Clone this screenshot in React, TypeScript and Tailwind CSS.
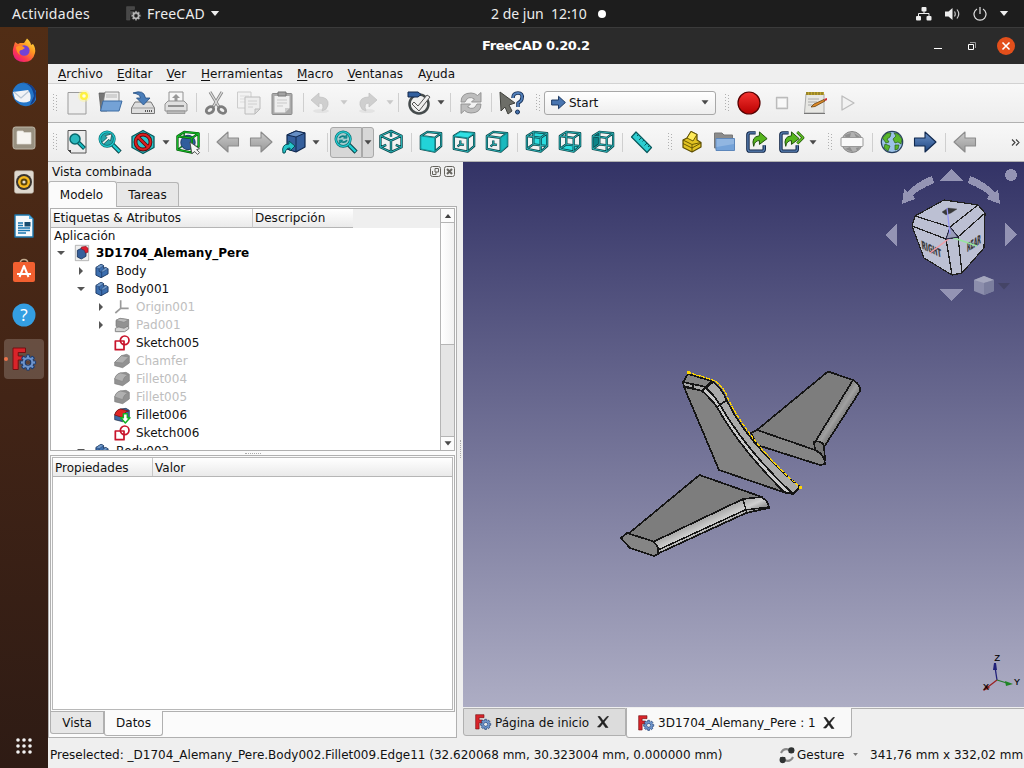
import React from "react";

type P = { children?: React.ReactNode };

const Ico = ({ children, className = "h-6 w-6", box = "0 0 24 24" }: P & { className?: string; box?: string }) => (
  <svg viewBox={box} className={className + " shrink-0 overflow-visible"} strokeLinejoin="round">
    {children}
  </svg>
);
const Slot = ({ children }: P) => <div className="flex w-[33px] shrink-0 justify-center">{children}</div>;
const Caret = ({ dim }: { dim?: boolean }) => (
  <svg viewBox="0 0 8 5" className="h-[5px] w-2 shrink-0">
    <path d="M.5 .3H7.5L4 4.6Z" fill={dim ? "#c9c9c9" : "#4a4a4a"} />
  </svg>
);
const Line = () => <div className="h-[19px] w-px bg-[#cfcfcf]" />;
const Handle = () => (
  <svg viewBox="0 0 5 18" className="h-[18px] w-[5px] shrink-0">
    {[0, 3, 6, 9, 12, 15].map((y) => (
      <g key={y} fill="#b0b0b0">
        <rect x="0" y={y} width="1" height="1" />
        <rect x="3" y={y + 1} width="1" height="1" />
      </g>
    ))}
  </svg>
);

const faces = {
  front: "1,6 16,8 16,23 1,20",
  top: "1,6 8,1.5 23,3 16,8",
  right: "16,8 23,3 23,17 16,23",
  rear: "8,1.5 23,3 23,17 8,15",
  bottom: "1,20 16,23 23,17 8,15",
  left: "1,6 8,1.5 8,15 1,20",
};
const cubeEdges = "M8 11V15L12 15.6M8 15L5 17.2M1 6L8 1.5L23 3V17L16 23L1 20ZM1 6L16 8V23M16 8L23 3";
const cubeOpen = "M8 1.5V15L23 17M8 15L1 20M1 6L8 1.5L23 3V17L16 23L1 20ZM1 6L16 8V23M16 8L23 3";
const ViewCube = ({ face }: { face: keyof typeof faces }) => {
  const outer = face === "front" ? "M1 6L8 1.5L23 3V17L16 23L1 20ZM1 6L16 8V23M16 8L23 3" : face === "top" || face === "right" ? cubeEdges : cubeOpen;
  return (
    <Ico box="-1 -0.500 26 26">
      <polygon points={faces[face]} fill={face === "left" ? "#0d8488" : face === "right" ? "#13a9ad" : "#2bdde0"} />
      <path d={outer} fill="none" stroke="#0b4347" strokeWidth="2.500" />
      <path d={outer} fill="none" stroke="#2bb9bc" strokeWidth="1" />
      {face === "front" && <polygon points={faces.front} fill="#22d3d8" stroke="#12888c" strokeWidth=".9" />}
      {face === "top" && <polygon points={faces.top} fill="#2fe0e4" stroke="#12888c" strokeWidth=".9" />}
      {face === "right" && <polygon points={faces.right} fill="#18b9be" stroke="#12888c" strokeWidth=".9" />}
    </Ico>
  );
};
const Lens = ({ kind }: { kind: "arrow" | "sync" }) => (
  <Ico box="-0.500 -0.500 25 25">
    <path d="M14 14L22.500 22.500" stroke="#073f43" strokeWidth="4.600" />
    <path d="M14 14L22 22" stroke="#20cdd2" strokeWidth="2.600" />
    <circle cx="9" cy="9" r="7.600" fill={kind === "arrow" ? "#25a5aa" : "#a5cdcf"} stroke="#0a6a6e" strokeWidth="2.700" />
    <circle cx="9" cy="9" r="7.600" fill="none" stroke="#20cdd2" strokeWidth="1.400" />
    {kind === "arrow" ? (
      <path d="M3.500 12.500L9 7.500L7 5.500L14 3.500L12.500 11L10.700 9.200L5.500 14Z" fill="#f4f4f4" stroke="#174a4e" strokeWidth=".8" />
    ) : (
      <g fill="none" stroke="#0f7e83" strokeWidth="1.800">
        <path d="M5 8Q7 4.500 11.500 6.500M13 10Q11 13.500 6.500 11.500" />
        <path d="M13 4V8H9.500ZM5 14V10H8.500Z" fill="#15989d" strokeWidth=".8" />
      </g>
    )}
  </Ico>
);
const Arrow = ({ dir, blue }: { dir: "l" | "r"; blue?: boolean }) => (
  <Ico>
    <defs>
      <linearGradient id={"ar" + dir + (blue ? "b" : "g")} x2="0" y2="1">
        <stop stopColor={blue ? "#6c93c9" : "#cacaca"} />
        <stop offset="1" stopColor={blue ? "#1d447f" : "#989898"} />
      </linearGradient>
    </defs>
    <path
      d={dir === "l" ? "M1 12L12 2V8H22.5V16H12V22Z" : "M23 12L12 2V8H1.5V16H12V22Z"}
      fill={"url(#ar" + dir + (blue ? "b" : "g") + ")"}
      stroke={blue ? "#10284e" : "#8b8b8b"}
      strokeWidth="1.1"
    />
  </Ico>
);
const Folder = () => (
  <Ico>
    <path d="M1.500 3H9L11 5H19.500V18H1.500Z" fill="#8b8b8b" stroke="#777" />
    <path d="M3 8.500H21.500V20.500H3Z" fill="#74a2d8" stroke="#5d87bb" />
    <path d="M3.500 9H21V14L3.500 17Z" fill="#91b6e1" />
  </Ico>
);
const Link = ({ multi }: { multi?: boolean }) => (
  <Ico box="0 0 25 25">
    <path d="M10 3H4Q2 3 2 5V20Q2 22 4 22H17Q19 22 19 20V16" fill="none" stroke="#0e2345" strokeWidth="3.600" />
    <path d="M10 3H4Q2 3 2 5V20Q2 22 4 22H17Q19 22 19 20V16" fill="none" stroke="#5e86ba" strokeWidth="1.300" />
    <path d="M8 17Q5 7 14 6V2L22 9L14 15V11Q9 11 8 17Z" fill="#56b51d" stroke="#1d4d08" strokeWidth="1" transform={multi ? "translate(-1 0)" : undefined} />
    {multi && <path d="M19 2L25 8L19 14" fill="none" stroke="#2a650d" strokeWidth="3" />}
    {multi && <path d="M19 2L25 8L19 14" fill="none" stroke="#66c729" strokeWidth="1.300" />}
  </Ico>
);
const Undo = ({ flip }: { flip?: boolean }) => (
  <Ico>
    <g transform={flip ? "translate(24 0) scale(-1 1)" : undefined}>
      <ellipse cx="13" cy="20" rx="8" ry="2" fill="#e3e3e3" />
      <path d="M3 9L11 2V6Q21 6 20 14Q19 19 14 20Q17 12 11 12V16Z" fill="#cfcfcf" stroke="#c3c3c3" strokeWidth=".8" />
    </g>
  </Ico>
);
const Gear = ({ fill, stroke }: { fill: string; stroke: string }) => (
  <g transform="translate(16 15.500)">
    {[0, 45, 90, 135].map((a) => (
      <rect key={a} x="-1.600" y="-7.600" width="3.200" height="15.200" rx=".5" fill={fill} stroke={stroke} strokeWidth="1" transform={"rotate(" + a + ")"} />
    ))}
    <circle r="5.400" fill={fill} />
    <circle r="2.600" fill="#e2e2e2" stroke={stroke} strokeWidth="1.400" />
  </g>
);
const FreeCad = ({ className, grey, hole = "#e8e8e8" }: { className: string; grey?: boolean; hole?: string }) => (
  <Ico className={className}>
    <path d="M1 1H13.500V5.500H6.200V9H11V13H6.200V22.500H1Z" fill={grey ? "#474747" : "#d9242a"} stroke={grey ? "#5a5a5a" : "#6f0b0e"} strokeWidth=".9" />
    <Gear fill={grey ? "#b8b8b8" : "#6e94cb"} stroke={grey ? "#444" : "#183a70"} />
    <circle cx="16" cy="15.500" r="2.300" fill={hole} />
  </Ico>
);

const Sync = ({ dark }: { dark?: boolean }) => (
  <Ico className={dark ? "h-4 w-4" : "h-6 w-6"}>
    {dark ? (
      <g>
        <path d="M3 9Q7 1 15 4M21 15Q17 23 9 20" fill="none" stroke="#8a8a8a" strokeWidth="3.200" />
        <circle cx="18.500" cy="5" r="4.700" fill="#303434" />
        <circle cx="5.500" cy="19.500" r="4.700" fill="#303434" />
        <path d="M14 9H22V1M2 23V15H10" fill="#303434" />
      </g>
    ) : (
      <g fill="#bdbdbd" stroke="#8f8f8f" strokeWidth=".9">
        <path d="M2 11Q2 2 12 2Q16 2 18.500 4.500L22 1.500V11H12.500L15.500 8Q9 4 6 11Z" />
        <path d="M22 13Q22 22 12 22Q8 22 5.500 19.500L2 22.500V13H11.500L8.500 16Q15 20 18 13Z" />
      </g>
    )}
  </Ico>
);

const TopBar = () => (
  <header className="flex h-[27px] shrink-0 items-center bg-[#1d1d1d] font-['Noto_Sans','DejaVu_Sans',sans-serif] text-[14px] leading-none text-[#ececec]">
    <span className="ml-3 w-[112px] tracking-[.3px]">Actividades</span>
    <FreeCad className="ml-[2px] h-[15px] w-[15px]" grey hole="#1d1d1d" />
    <span className="ml-[6px] w-[60px] tracking-[.2px]">FreeCAD</span>
    <svg viewBox="0 0 10 6" className="ml-[3px] h-[5px] w-[10px]"><path d="M0 0H10L5 6Z" fill="#eee" /></svg>
    <span className="ml-[271px] w-[98px] whitespace-pre">2 de jun  12:10</span>
    <span className="ml-[9px] h-2 w-2 rounded-full bg-white" />
    <div className="ml-auto flex items-center pr-[15px]">
      <svg viewBox="0 0 16 14" className="h-[14px] w-4" fill="#eee"><rect x="5.500" width="5" height="4.500" rx="1" /><rect x="0" y="9" width="5" height="4.500" rx="1" /><rect x="10.500" y="9" width="5" height="4.500" rx="1" /><path d="M2.500 9V6.500H13V9M8 4V7" fill="none" stroke="#eee" /></svg>
      <svg viewBox="0 0 16 14" className="ml-[13px] h-[14px] w-4"><path d="M0 4.500H3.500L7.500 1V13L3.500 9.500H0Z" fill="#eee" /><path d="M9.500 4.500Q11 7 9.500 9.500M12 2.500Q15.500 7 12 11.500" fill="none" stroke="#ccc" strokeWidth="1.200" /></svg>
      <svg viewBox="0 0 14 14" className="ml-[12px] h-[14px] w-[14px]"><path d="M4 2A6 6 0 1 0 10 2M7 0V7" fill="none" stroke="#e4e4e4" strokeWidth="1.200" /></svg>
      <svg viewBox="0 0 10 6" className="ml-[12px] h-[5px] w-[10px]"><path d="M0 0H10L5 6Z" fill="#eee" /></svg>
    </div>
  </header>
);

const DockSlot = ({ children, active }: P & { active?: boolean }) => (
  <div className="flex h-[44.1px] w-full shrink-0 items-center">
    <span className={active ? "ml-1 h-1 w-1 rounded-full bg-[#e95420]" : "ml-1 h-1 w-1"} />
    <div className={active ? "-ml-1 flex h-10 w-10 items-center justify-center rounded bg-[#ffffff30]" : "-ml-1 flex h-10 w-10 items-center justify-center"}>{children}</div>
  </div>
);
const Dock = () => (
  <aside className="flex w-12 shrink-0 flex-col bg-gradient-to-b from-[#512d15] via-[#422416] to-[#2e1b14] pt-[1px]">
    <DockSlot>
      <Ico>
        <defs>
          <linearGradient id="ff" x1="1" x2=".2" y2="1"><stop stopColor="#fff44f" /><stop offset=".4" stopColor="#ff9a20" /><stop offset=".75" stopColor="#ff3b4e" /><stop offset="1" stopColor="#e31587" /></linearGradient>
        </defs>
        <path d="M1.500 9L3 4L6 6L8 5L12 5L15 .5Q19 4 19 7L21 6Q24 10 23 15Q21 24 12 24Q3 24 1 16Q.3 12 1.500 9Z" fill="url(#ff)" />
        <circle cx="12.300" cy="12.500" r="5.300" fill="#7342d6" />
        <path d="M4 9Q9 6 13 10L10 12Q6 12 8 17Q4 14 4 9Z" fill="#ff9226" />
      </Ico>
    </DockSlot>
    <DockSlot>
      <Ico>
        <path d="M6 2Q13-2 20 4L24 9V18Q20 25 12 24Q3 22 .5 13Q0 6 6 2Z" fill="#2376c9" />
        <path d="M9 1Q20 1 22 14L18 23Q24 20 24 11Q22 0 9 1Z" fill="#153f8b" />
        <path d="M1 10L16 8Q20 13 18 19Q10 23 3 17Z" fill="#f2f3f6" />
        <path d="M2 10L9 16L17 9" fill="none" stroke="#b8c5d4" strokeWidth="1.200" />
      </Ico>
    </DockSlot>
    <DockSlot>
      <Ico><rect x="1" y="1" width="22" height="22" rx="2.500" fill="#989080" stroke="#beb7a8" /><path d="M5 6Q5 5 6 5H11L12 6.500H19V18H5Z" fill="#f6f4f0" stroke="#e0dcd4" strokeWidth=".7" /></Ico>
    </DockSlot>
    <DockSlot>
      <Ico><rect x="2.500" y=".8" width="19" height="22.500" rx="2" fill="#dfd9cf" stroke="#b6afa2" strokeWidth=".6" /><circle cx="12" cy="12" r="8" fill="#393531" /><circle cx="12" cy="12" r="6" fill="#f5b81e" /><circle cx="12" cy="12" r="3.500" fill="#57430c" /><circle cx="12" cy="12" r="1.600" fill="#e7e1d3" /></Ico>
    </DockSlot>
    <DockSlot>
      <Ico><path d="M3 1H17L21 5V23H3Z" fill="#f5f9fc" stroke="#1c78af" strokeWidth="1.400" /><path d="M17 1V5H21Z" fill="#58b2e4" /><path d="M6 9H11M6 11.500H11M6 14H18M6 16.500H18M6 19H14" stroke="#1976af" strokeWidth="1.300" /><rect x="12.500" y="8" width="6" height="4.500" fill="#164c70" /></Ico>
    </DockSlot>
    <DockSlot>
      <Ico><path d="M8 5Q8 .5 12 .5T16 5" fill="none" stroke="#c1a98d" strokeWidth="1.400" /><rect x="1" y="3" width="22" height="20" rx="2" fill="#f26030" /><path d="M7.500 18L12 7L16.500 18M5 15H19" fill="none" stroke="#fff" strokeWidth="2" /></Ico>
    </DockSlot>
    <DockSlot>
      <Ico><circle cx="12" cy="12" r="11.500" fill="#349ee2" /><text x="12" y="18" fontSize="17" textAnchor="middle" fill="#fff" fontFamily="Noto Sans, sans-serif">?</text></Ico>
    </DockSlot>
    <DockSlot active><FreeCad className="h-6 w-6" hole="#5d4033" /></DockSlot>
    <svg viewBox="0 0 16 16" className="mt-auto mb-[14px] ml-4 h-4 w-4" fill="#f3f3f3">
      {[2, 8, 14].map((x) => [2, 8, 14].map((y) => <circle key={x + "-" + y} cx={x} cy={y} r="1.800" />))}
    </svg>
  </aside>
);

const Menu = () => (
  <nav className="flex h-[19px] shrink-0 items-center bg-[#efefef] pl-[10px] text-[12px] leading-none">
    {[
      ["A", "rchivo", "w-[59px]"],
      ["E", "ditar", "w-[49.500px]"],
      ["V", "er", "w-[34.500px]"],
      ["H", "erramientas", "w-[96px]"],
      ["M", "acro", "w-[50.500px]"],
      ["V", "entanas", "w-[70.500px]"],
      ["Ay", "uda", "w-[50px]"],
    ].map(([a, b, w]) => (
      <span key={a + b} className={w + " shrink-0"}>
        {a === "Ay" ? <>A<u className="underline-offset-2">y</u></> : <u className="underline-offset-2">{a}</u>}
        {b}
      </span>
    ))}
  </nav>
);

const ToolbarFile = () => (
  <div className="flex h-10 shrink-0 items-center border-t border-b border-t-[#d2d2d2] border-b-[#b1b1b1] bg-gradient-to-b from-[#f8f8f8] to-[#ededed] pb-px">
    <div className="flex w-[12.500px] shrink-0 pl-[5px]"><Handle /></div>
    <Slot><Ico><path d="M3 1.500H21V23H3Z" fill="#eee" stroke="#9b9b9b" /><circle cx="19" cy="5" r="6" fill="#fff79a" opacity=".5" /><circle cx="19" cy="5" r="4" fill="#fff23d" /><circle cx="19" cy="5" r="1.800" fill="#fffde0" /></Ico></Slot>
    <Slot><Ico><path d="M1 2H8L9 4V20H3Z" fill="#777" stroke="#555" strokeWidth=".7" /><path d="M7 1H21V13H5Z" fill="#ededed" stroke="#777" strokeWidth=".8" /><path d="M8 4H19M8 6H19" stroke="#b5b5b5" /><path d="M5 10H24L21 20H2.500Z" fill="#74a2d6" stroke="#3c6ca3" /></Ico></Slot>
    <Slot><Ico><path d="M4 11H20L23.500 17V22.500H.500V17Z" fill="#dedede" stroke="#777" /><path d="M.500 17H23.500" stroke="#9b9b9b" /><path d="M14 20H21" stroke="#555" strokeWidth="2" strokeDasharray="1 1" /><path d="M2 2Q13-2 14.500 7H19L12.500 14L5.500 7H9.500Q9 3 2 2Z" fill="#4a7db9" stroke="#254e82" strokeWidth=".8" /></Ico></Slot>
    <Slot><Ico><path d="M5 1H19V13H5Z" fill="#f7f7f7" stroke="#929292" /><path d="M12 3L16 7H13.500V11H10.500V7H8Z" fill="#989898" /><path d="M1 13L4 10H20L23 13V20H1Z" fill="#e0e0e0" stroke="#929292" /><path d="M4 15H20" stroke="#777" strokeWidth="1.500" /><path d="M3 20H21V22.500H3Z" fill="#bbb" stroke="#8d8d8d" strokeWidth=".7" /></Ico></Slot>
    <div className="flex w-[7px] justify-center"><Line /></div>
    <Slot><Ico><path d="M6 1L15 16M18 1L9 16" stroke="#888" strokeWidth="3" /><path d="M6 1L15 16M18 1L9 16" stroke="#ddd" strokeWidth="1.300" /><g fill="none" stroke="#7d7d7d" strokeWidth="2.800"><ellipse cx="6" cy="19" rx="4" ry="3" transform="rotate(-35 6 19)" /><ellipse cx="18" cy="19" rx="4" ry="3" transform="rotate(35 18 19)" /></g></Ico></Slot>
    <Slot><Ico><path d="M.500 1H14V17H.500Z" fill="#f2f2f2" stroke="#ccc" /><path d="M3 5H12M3 8H8M3 11H8" stroke="#ddd" /><path d="M8 6H23V18L18 23H8Z" fill="#ededed" stroke="#bcbcbc" /><path d="M11 10H20M11 13H20M11 16H16" stroke="#d0d0d0" /><path d="M18 23V18H23Z" fill="#ddd" stroke="#bbb" /></Ico></Slot>
    <Slot><Ico><rect x="2" y="2.500" width="20" height="21" rx="1" fill="#aaa" stroke="#8b8b8b" /><path d="M4.500 5H19.500V17L15 21.500H4.500Z" fill="#eee" /><path d="M8 1H16V5H8Z" fill="#a2a2a2" stroke="#777" /><path d="M7 9H17M7 12H17M7 15H13" stroke="#c9c9c9" /><path d="M15 21.500V17H19.500Z" fill="#ccc" /></Ico></Slot>
    <div className="flex w-[5px] justify-end"><Line /></div>
    <Slot><Undo /></Slot>
    <div className="flex w-[15px] justify-center"><Caret dim /></div>
    <Slot><Undo flip /></Slot>
    <div className="flex w-[10px] shrink-0 justify-center"><Caret dim /></div>
    <div className="flex w-2 justify-center"><Line /></div>
    <Slot><Ico><circle cx="12" cy="13" r="9.500" fill="#efefef" stroke="#454b4c" strokeWidth="2.500" /><path d="M1 1H11L14 3.500L11 6H1Z" fill="#315f9f" stroke="#14294b" /><path d="M5 13L7 11L11 15L20 4L23 6L12 20Z" fill="#eee" stroke="#555" /></Ico></Slot>
    <div className="flex w-[11px] justify-center"><Caret /></div>
    <div className="flex w-2 justify-center"><Line /></div>
    <Slot><Sync /></Slot>
    <div className="flex w-[7px] justify-center"><Line /></div>
    <Slot><Ico><path d="M1 1L16 12L10 14L13 20L9 23L6 16L2 20Z" fill="#6d6e68" stroke="#41423d" /><path d="M14 7Q14 2 19 2T23 7Q23 10 19 12V16" fill="none" stroke="#172f56" strokeWidth="3.600" /><path d="M14 7Q14 2 19 2T23 7Q23 10 19 12V16" fill="none" stroke="#5280bb" strokeWidth="1.800" /><circle cx="18.500" cy="21" r="2" fill="#4673ad" stroke="#172f56" /></Ico></Slot>
    <div className="flex w-[16.500px] shrink-0 justify-center pl-[6px]"><Handle /></div>
    <div className="flex h-6 w-[172px] shrink-0 items-center rounded-[3px] border border-[#a8a8a8] bg-gradient-to-b from-white to-[#eee] pr-[6px] pl-[6px]">
      <svg viewBox="0 0 24 24" className="h-[15px] w-[15px]"><path d="M1 8H12V2L23 12L12 22V16H1Z" fill="#4975b0" stroke="#15335f" strokeWidth="1.500" /></svg>
      <span className="ml-[3px] flex-1 text-[12px] leading-none">Start</span>
      <Caret />
    </div>
    <div className="flex w-[16.500px] shrink-0 justify-center pl-[6px]"><Handle /></div>
    <Slot><Ico><defs><linearGradient id="rec" x2="0" y2="1"><stop stopColor="#f53431" /><stop offset="1" stopColor="#b80000" /></linearGradient></defs><circle cx="12" cy="12" r="11" fill="url(#rec)" stroke="#500" strokeWidth="1.200" /></Ico></Slot>
    <Slot><Ico><rect x="6.500" y="6.500" width="11" height="11" fill="#e8e8e8" stroke="#bbb" strokeWidth="1.300" /><rect x="8" y="8" width="8" height="8" fill="#f8f8f8" /></Ico></Slot>
    <Slot><Ico><path d="M3 3H21V22H1.500Z" fill="#e7e7e3" stroke="#aaa" /><path d="M3 1H21V4H3Z" fill="#bea42f" /><path d="M4 1V4M7 1V4M10 1V4M13 1V4M16 1V4M19 1V4" stroke="#675a22" strokeWidth=".8" /><path d="M5 8H16M5 11H14M5 14H10" stroke="#aaa" /><path d="M8 16L11 13L21 8.500L22 10L12 15.500Z" fill="#e08b28" stroke="#6a410f" strokeWidth=".8" /><path d="M21 8L24 7V9L22.500 10Z" fill="#d02a36" /><path d="M1 22.500H22" stroke="#777" /></Ico></Slot>
    <Slot><Ico><path d="M6 5L18 12L6 19Z" fill="#f2f2f2" stroke="#bdbdbd" strokeWidth="1.300" /></Ico></Slot>
  </div>
);

const isoEdges = "M12 1L23 6V18L12 23L1 18V6ZM1 6L12 11L23 6M12 11V23M12 1V7M1 18L7 15.500M23 18L17 15.500";
const ToolbarView = () => (
  <div className="flex h-[39px] shrink-0 items-center border-b border-[#b1b1b1] bg-gradient-to-b from-[#f8f8f8] to-[#ededed]">
    <div className="flex w-[12.500px] shrink-0 pl-[5px]"><Handle /></div>
    <Slot><Ico><path d="M3 .5H21V23H6L3 20Z" fill="#ececec" stroke="#555" /><path d="M3 20H6V23Z" fill="#444" /><path d="M13 12L19.500 18.500" stroke="#075054" strokeWidth="4" /><path d="M13 12L19 18" stroke="#18bcc2" strokeWidth="2" /><circle cx="10" cy="9" r="5" fill="#2bb9bd" stroke="#07666a" strokeWidth="1.500" /></Ico></Slot>
    <Slot><Lens kind="arrow" /></Slot>
    <Slot><Ico><path d="M12 .5L23 6.500V17.500L12 23.500L1 17.500V6.500Z" fill="#29c6cb" stroke="#08575b" strokeWidth="1.300" /><circle cx="12" cy="12" r="7.500" fill="none" stroke="#5b0a0d" strokeWidth="3.800" /><path d="M6.500 6.500L17.500 17.500" stroke="#5b0a0d" strokeWidth="3.800" /><circle cx="12" cy="12" r="7.500" fill="none" stroke="#dc2020" strokeWidth="2" /><path d="M6.500 6.500L17.500 17.500" stroke="#dc2020" strokeWidth="2" /></Ico></Slot>
    <div className="flex w-3 shrink-0 justify-center"><Caret /></div>
    <Slot><Ico box="-0.500 -0.500 25 25"><path d="M8 1.500V15L23 17M8 15L1 20" fill="none" stroke="#0b7a18" strokeWidth="1.600" /><circle cx="12" cy="12.500" r="7.500" fill="#315d9c" stroke="#183766" /><path d="M1 6L8 1.500L23 3V17L16 23L1 20ZM1 6L16 8V23M16 8L23 3" fill="none" stroke="#075109" strokeWidth="2.400" /><path d="M1 6L8 1.500L23 3V17L16 23L1 20ZM1 6L16 8V23M16 8L23 3" fill="none" stroke="#12b726" strokeWidth="1.200" /><path d="M14 12L24 19L21 20L24 23L22 25L19 22L16 24Z" fill="#f5f5f5" stroke="#444" strokeWidth=".9" /></Ico></Slot>
    <div className="flex w-[7px] justify-center"><Line /></div>
    <Slot><Arrow dir="l" /></Slot>
    <Slot><Arrow dir="r" /></Slot>
    <Slot><Ico><path d="M5 5L14 1L23 3V17L14 22L5 19Z" fill="#355f9c" stroke="#10284f" strokeWidth="1.200" /><path d="M5 5L14 7L23 3L14 1Z" fill="#668fc5" stroke="#10284f" /><path d="M14 7V22" stroke="#10284f" /><path d="M1 23Q-1 14 7 14V11L13 16L8 21V18Q4 18 3 23Z" fill="#25c5ca" stroke="#075156" /></Ico></Slot>
    <div className="flex w-[11.500px] shrink-0 justify-center"><Caret /></div>
    <div className="flex w-2 shrink-0 justify-center pl-[2px]"><Line /></div>
    <div className="flex h-[31px] w-8 shrink-0 items-center justify-center rounded-l-[3px] border border-[#a9a9a9] bg-[#d7d7d7]"><Lens kind="sync" /></div>
    <div className="mr-[.5px] flex h-[31px] w-3 shrink-0 items-center justify-center rounded-r-[3px] border border-[#a9a9a9] bg-[#d7d7d7]"><Caret /></div>
    <Slot><Ico box="-0.500 0 25 25"><g fill="none"><path d={isoEdges} stroke="#0b4347" strokeWidth="2.500" /><path d={isoEdges} stroke="#2bb9bc" strokeWidth="1" /></g></Ico></Slot>
    <div className="flex w-[7px] justify-center"><Line /></div>
    <Slot><ViewCube face="front" /></Slot>
    <Slot><ViewCube face="top" /></Slot>
    <Slot><ViewCube face="right" /></Slot>
    <div className="flex w-[7px] justify-center"><Line /></div>
    <Slot><ViewCube face="rear" /></Slot>
    <Slot><ViewCube face="bottom" /></Slot>
    <Slot><ViewCube face="left" /></Slot>
    <div className="flex w-[6px] justify-center"><Line /></div>
    <Slot><Ico><path d="M6 2L21.500 17.500L17 22.500L1.500 7Z" fill="#2ccdd1" stroke="#08585c" strokeWidth="1.200" /><path d="M8.500 4.500L7 6M11.500 7.500L9 10M14 10L12.500 11.500M17 13L14.500 15.500M19.500 15.500L18 17" stroke="#08585c" /></Ico></Slot>
    <div className="flex w-[17px] shrink-0 justify-center pl-[6px]"><Handle /></div>
    <Slot><Ico><path d="M3 10L7 8L11 1.500L17 4.500V10L21 12.500V17L12 22L3 17.500Z" fill="#e2c322" stroke="#5c4d00" strokeWidth="1.200" /><path d="M3 13.500L12 18L21 13M12 15V22M3 10L12 14.500L21 12.500" fill="none" stroke="#5c4d00" strokeWidth=".9" /><path d="M7 8L11 1.500L17 4.500L13 11Z" fill="#ffeb59" stroke="#5c4d00" strokeWidth=".9" /></Ico></Slot>
    <Slot><Folder /></Slot>
    <Slot><Link /></Slot>
    <Slot><Link multi /></Slot>
    <div className="flex w-[11px] shrink-0 justify-center"><Caret /></div>
    <div className="flex w-[17px] shrink-0 justify-center pl-[6px]"><Handle /></div>
    <Slot><Ico><circle cx="12" cy="12" r="10.500" fill="#b1b1b1" stroke="#858585" /><path d="M5 5L11 3L10 7L6 9ZM14 3L20 7L17 9ZM5 19L10 17L13 22ZM16 18L20 17L17 21Z" fill="#8e8e8e" /><rect x="1" y="7.500" width="22" height="9" rx="1" fill="#f9f9f9" stroke="#999" /></Ico></Slot>
    <div className="flex w-[7px] justify-center"><Line /></div>
    <Slot><Ico><circle cx="12" cy="12" r="10.700" fill="#9cc2e8" stroke="#28415f" strokeWidth="1.200" /><path d="M2.500 8L7 3L11 3L10 7L7 9L9 12L6 13ZM5 14L10 16L8 21L4 18ZM14 3L18 4L22 9L21 14L18 12L15 13L13 9L16 6ZM15 15L19 15L18 19L15 20Z" fill="#58b72b" stroke="#285d18" strokeWidth=".7" /></Ico></Slot>
    <Slot><Arrow dir="r" blue /></Slot>
    <div className="flex w-[7px] justify-center"><Line /></div>
    <Slot><Arrow dir="l" /></Slot>
    <svg viewBox="0 0 9 7" className="mr-[4px] ml-auto h-[7px] w-[9px]"><path d="M1 .5L4 3.500L1 6.500M5 .5L8 3.500L5 6.500" fill="none" stroke="#3b3b3b" strokeWidth="1.100" /></svg>
  </div>
);

const BodyIcon = () => (
  <Ico className="h-4 w-4" box="0 0 25 25">
    <path d="M3 7L11 2L15 4V8L18 7L22 9V17L11 23L3 19Z" fill="#3d6faf" stroke="#15305a" strokeWidth="1.300" />
    <path d="M3 7L11 2L15 4L8 9ZM11 13L18 7L22 9L14 14Z" fill="#719aca" stroke="#15305a" strokeWidth=".6" />
    <path d="M8 9V13L12 15V23" fill="none" stroke="#15305a" />
  </Ico>
);
const SolidIcon = ({ active, bevel }: { active?: boolean; bevel?: boolean }) => (
  <Ico className="h-4 w-4">
    <path d={bevel ? "M1 14L11 4L19 2L23 4V15L13 22L1 19Z" : "M1 12Q3 5 9 3L18 2L23 5V15L13 22L1 19Z"} fill={active ? "#3d69a6" : "#929292"} stroke={active ? "#202b40" : "#7c7c7c"} strokeWidth="1" />
    <path d={bevel ? "M1 14L11 4L22 6L13 15Z" : "M1 12Q3 4 10 3L22 6Q15 7 13 16Z"} fill={active ? "#df2626" : "#b0b0b0"} stroke={active ? "#6d0c0c" : "#858585"} />
    {active && <path d="M14 10H20V16H24L17 24L10 16H14Z" fill="#fff" stroke="#14b226" strokeWidth="2.200" />}
  </Ico>
);
const SketchIcon = () => (
  <Ico className="h-4 w-4"><g fill="none" stroke="#c8142b" strokeWidth="2.600"><path d="M2 9H15V22H2Z" /><circle cx="16" cy="8" r="6.500" /></g></Ico>
);
const OriginIcon = () => (
  <Ico className="h-4 w-4"><path d="M10 2V14H22M10 14L2 21" fill="none" stroke="#9a9a9a" strokeWidth="2.500" /></Ico>
);
const PadIcon = () => (
  <Ico className="h-4 w-4"><path d="M2 17L8 14H22V18L16 22H2Z" fill="#d2d2d2" stroke="#888" strokeWidth="1.500" /><path d="M3 5L9 2L22 4V13L15 17L3 14Z" fill="#929292" stroke="#747474" /><path d="M3 5L9 2L22 4L15 8Z" fill="#bbb" stroke="#858585" /></Ico>
);
const DocIcon = () => (
  <Ico className="h-4 w-4"><path d="M2 .5H22V23.500H2Z" fill="#eee" stroke="#999" /><path d="M5 8L13 4L18 7V17L11 21L5 18Z" fill="#355f9b" stroke="#132d54" strokeWidth="1.200" /><path d="M11 3L18 2L21 5V11L17 12Q17 7 11 6Z" fill="#dd1d2d" stroke="#7b1320" strokeWidth=".8" /></Ico>
);
const TreeArrow = ({ open }: { open?: boolean }) => (
  <svg viewBox="0 0 8 8" className="h-2 w-2 shrink-0"><path d={open ? "M0 2H8L4 6Z" : "M2 0L6 4L2 8Z"} fill="#555" /></svg>
);
type Row = { label: string; pad: string; icon: React.ReactNode; arrow?: "open" | "closed"; dim?: boolean; bold?: boolean };
const rows: Row[] = [
  { label: "3D1704_Alemany_Pere", pad: "pl-[6px]", icon: <DocIcon />, arrow: "open", bold: true },
  { label: "Body", pad: "pl-[26px]", icon: <BodyIcon />, arrow: "closed" },
  { label: "Body001", pad: "pl-[26px]", icon: <BodyIcon />, arrow: "open" },
  { label: "Origin001", pad: "pl-[46px]", icon: <OriginIcon />, arrow: "closed", dim: true },
  { label: "Pad001", pad: "pl-[46px]", icon: <PadIcon />, arrow: "closed", dim: true },
  { label: "Sketch005", pad: "pl-[46px]", icon: <SketchIcon /> },
  { label: "Chamfer", pad: "pl-[46px]", icon: <SolidIcon bevel />, dim: true },
  { label: "Fillet004", pad: "pl-[46px]", icon: <SolidIcon />, dim: true },
  { label: "Fillet005", pad: "pl-[46px]", icon: <SolidIcon />, dim: true },
  { label: "Fillet006", pad: "pl-[46px]", icon: <SolidIcon active /> },
  { label: "Sketch006", pad: "pl-[46px]", icon: <SketchIcon /> },
  { label: "Body002", pad: "pl-[26px]", icon: <BodyIcon />, arrow: "open" },
];

const ModelPanel = () => (
  <section className="flex w-[409px] shrink-0 flex-col">
    <div className="flex h-[19px] shrink-0 items-center pr-[2px] pl-1 leading-none">
      <span className="flex-1">Vista combinada</span>
      <svg viewBox="0 0 25 11" className="h-[11px] w-[25px]" fill="none" stroke="#66645e">
        <rect x=".5" y=".5" width="10" height="10" rx="2" /><path d="M5 2.500H8.500V6H5ZM2.500 5V8.500H6V6" />
        <rect x="14.500" y=".5" width="10" height="10" rx="2" /><path d="M17 3L22 8M22 3L17 8" strokeWidth="2" />
      </svg>
    </div>
    <div className="flex h-[25px] shrink-0 items-end">
      <div className="z-10 -mb-px flex h-[26px] w-[69px] items-center justify-center rounded-t-[3px] border border-b-0 border-[#b5b5b5] bg-[#fbfbfb] pr-[2px] leading-none">Modelo</div>
      <div className="flex h-6 w-[62px] items-center justify-center rounded-tr-[3px] border border-b-0 border-l-0 border-[#b5b5b5] bg-[#e7e7e7] pt-px leading-none">Tareas</div>
    </div>
    <div className="flex h-[532px] shrink-0 flex-col border border-[#b0b0b0] bg-[#fbfbfb] p-[1px]">
      <div className="flex h-[243px] shrink-0 border border-[#b0b0b0] bg-white">
        <div className="flex min-w-0 flex-1 flex-col overflow-hidden">
          <div className="flex h-[19px] shrink-0 bg-[#efefef] leading-none">
            <div className="flex w-[202px] items-center border-r border-b border-r-[#c8c8c8] border-b-[#b5b5b5] bg-gradient-to-b from-white to-[#eaeaea] pl-[2px]">Etiquetas &amp; Atributos</div>
            <div className="flex w-[100px] items-center border-b border-[#b5b5b5] bg-gradient-to-b from-white to-[#eaeaea] pl-[2px]">Descripción</div>
          </div>
          <div className="flex h-[16px] shrink-0 items-center pl-[3px] leading-none">Aplicación</div>
          {rows.map((r) => (
            <div key={r.label} className={r.pad + " flex h-[18px] shrink-0 items-center leading-none"}>
              <div className="flex w-[17px] shrink-0">{r.arrow && <TreeArrow open={r.arrow === "open"} />}</div>
              {r.icon}
              <span className={r.bold ? "ml-[6px] font-bold text-black" : r.dim ? "ml-[6px] text-[#bebebe]" : "ml-[6px]"}>{r.label}</span>
            </div>
          ))}
        </div>
        <div className="flex w-[14px] shrink-0 flex-col border-l border-[#b5b5b5] bg-[#e5e5e5]">
          <div className="flex h-[14px] items-center justify-center border-b border-[#b5b5b5] bg-[#fcfcfc]"><svg viewBox="0 0 8 5" className="h-1 w-2"><path d="M0 5H8L4 0Z" fill="#444" /></svg></div>
          <div className="h-[122px] border-b border-[#b5b5b5] bg-gradient-to-r from-white to-[#f2f2f2]" />
          <div className="mt-auto flex h-[14px] items-center justify-center border-t border-[#b5b5b5] bg-[#fcfcfc]"><Caret /></div>
        </div>
      </div>
      <div className="flex h-[4px] shrink-0 items-center justify-center"><div className="h-px w-4 border-t border-dotted border-[#aaa]" /></div>
      <div className="h-[257px] shrink-0 border border-[#b0b0b0] p-px">
        <div className="h-full border border-[#b8b8b8] bg-white">
          <div className="flex h-[19px] border-b border-[#b5b5b5] bg-gradient-to-b from-white to-[#eaeaea] pt-px leading-none">
            <div className="-mt-px flex w-[100px] items-center border-r border-[#c8c8c8] pt-px pl-[2px]">Propiedades</div>
            <div className="flex items-center pl-[2px]">Valor</div>
          </div>
        </div>
      </div>
      <div className="-mt-px flex shrink-0 items-start leading-none">
        <div className="mt-px flex h-[22px] w-[54px] items-center justify-center rounded-bl-[3px] border border-t-0 border-[#b0b0b0] bg-[#e7e7e7]">Vista</div>
        <div className="flex h-[25px] w-[59px] items-center justify-center rounded-b-[3px] border border-t-0 border-[#b0b0b0] bg-[#fbfbfb]">Datos</div>
      </div>
    </div>
  </section>
);

const Viewport = () => (
  <svg viewBox="463 162 561 545" className="h-[545px] w-[561px] shrink-0" fontFamily="DejaVu Sans, sans-serif">
    <defs>
      <linearGradient id="sky" x2="0" y2="1"><stop stopColor="#333366" /><stop offset="1" stopColor="#adadc4" /></linearGradient>
      <linearGradient id="rim" gradientUnits="userSpaceOnUse" x1="704" y1="516" x2="713" y2="535"><stop stopColor="#a0a0a0" /><stop offset=".5" stopColor="#cecece" /><stop offset="1" stopColor="#777" /></linearGradient>
      <linearGradient id="rim2" gradientUnits="userSpaceOnUse" x1="831" y1="407" x2="846" y2="417"><stop stopColor="#777" /><stop offset=".55" stopColor="#a0a0a0" /><stop offset="1" stopColor="#707070" /></linearGradient>
    </defs>
    <rect x="463" y="162" width="561" height="545" fill="url(#sky)" />
    <g fill="#9494b4" shapeRendering="crispEdges">
      <path d="M940 181L951 169L963 181ZM897 223V246L885 235ZM1005 223V246L1017 235ZM940 289H963L951 301Z" />
      <path d="M932 176L934 183Q920 189 913 195L915 199L902 204L904 189L907 192Q918 181 932 176Z" />
      <path d="M970 176L968 183Q982 189 989 195L987 199L1000 204L998 189L995 192Q984 181 970 176Z" />
      <circle cx="1011" cy="175" r="6" />
    </g>
    <path d="M998 283H1010L1004 289.500Z" fill="#444466" />
    <path d="M974 280L984 276L994 280V291L984 295L974 291Z" fill="#8c8eac" />
    <path d="M974 280L984 283L994 280L984 276Z" fill="#a5a7be" />
    <path d="M984 283V295L994 291V280Z" fill="#7b7e9e" />
    <g stroke="#202020" strokeLinejoin="round" shapeRendering="crispEdges">
      <path d="M915 216L944 200L978 205L985 213L984 248L962 273L952 275L924 258L912 226Z" fill="#bcc0d3" strokeWidth="1.200" />
      <path d="M915 216L950 227L978 205M912 226L946 239L950 227L958 237L985 213M946 239L952 275M958 237L962 273M946 239L958 237" fill="none" strokeWidth="1.200" />
    </g>
    <g fill="#383838" stroke="#383838" strokeWidth=".3" fontWeight="bold">
      <text x="0" y="0" fontSize="10" transform="matrix(.56 .26 .12 1.100 922 248.500)">RIGHT</text>
      <text x="0" y="0" fontSize="10" transform="matrix(.46 -.3 0 1.200 967 252)">REAR</text>
      <path d="M942 212L948 208L957 209L951 213L946 215Z" />
    </g>
    <path d="M951 237L930 253" stroke="#f19aa3" strokeWidth="1.500" />
    <path d="M951 237L977 246" stroke="#97e59e" strokeWidth="1.500" />
    <path d="M950 227L946 239L958 237Z" fill="#999db8" stroke="#242446" />
    <path d="M950 234L947 208" stroke="#9696f5" strokeWidth="1.300" />
    <g stroke="#151515" strokeWidth="1.700" strokeLinejoin="round" shapeRendering="crispEdges">
      <path d="M757 430L828 371.500L853 380L815 450Z" fill="#7d7d7d" />
      <path d="M853 380Q861 385 860 391L824 447L820 442H815Z" fill="url(#rim2)" />
      <path d="M751 433L757 430L815 450Q825 455 825 464L820 465L757 445Z" fill="#858585" />
      <path d="M815 450L814 442Q822 440 824 446L825 460Q821 452 815 450Z" fill="#777" />
      <path d="M684 387L719 470L786 493L717 407L703 391Z" fill="#828282" />
      <path d="M702 391Q711 398 717 407C735 440 760 468 784 492L793 494C765 468 738 436 720 405Q714 395 706 388Z" fill="#c8c8c8" />
      <path d="M706 388L713 382Q722 388 727 401C745 437 772 464 800 487L793 494C765 468 738 436 720 405Q714 395 706 388Z" fill="#ababab" />
      <path d="M683 382L688 374L712 381L706 387Z" fill="#858585" />
      <path d="M683 382L706 387L702 391L684 386Z" fill="#a8a8a8" />
      <path d="M717 407L727 400M693 384V389" fill="none" />
      <path d="M628 534L699.500 475L762 497L742 500L655 542Z" fill="#7d7d7d" />
      <path d="M653 542L743 499L761 497Q769 501 769 508L746 513L657 554Q660 547 653 542Z" fill="url(#rim)" />
      <path d="M621 538L627 533L652 541Q660 546 658 554L654 556L630 548Z" fill="#858585" />
      <path d="M658 550L745 510L769 507M743 500L747 513" fill="none" strokeWidth="1.500" />
    </g>
    <path d="M687 372L713 380Q724 386 728 399C745 433 773 464 801 488" fill="none" stroke="#ffd500" strokeWidth="1.300" strokeDasharray="4 1" shapeRendering="crispEdges" />
    <rect x="687" y="371" width="3" height="3" fill="#ffd500" />
    <rect x="799" y="486" width="3" height="3" fill="#ffd500" />
    <g strokeWidth="1.300">
      <path d="M997 680L995 667" stroke="#20207a" /><path d="M994 663L996 663L997 670H993Z" fill="#20207a" />
      <path d="M997 680L1010 684" stroke="#247c2a" /><path d="M1005 681L1013 684L1006 686Z" fill="#1e8524" />
      <path d="M997 680L984 690" stroke="#922" /><path d="M983 691L990 688L987 685Z" fill="#922" />
    </g>
    <g fill="#000" stroke="#000" strokeWidth=".2" fontSize="9" fontFamily="Liberation Sans, sans-serif"><text x="994.500" y="661">Z</text><text x="983" y="690">X</text><text x="1014" y="685">Y</text></g>
  </svg>
);

const CloseX = () => (
  <svg viewBox="0 0 12 12" className="h-3 w-3 shrink-0"><path d="M1 .5H3L11 11.500H8.500ZM10 .5H11.500L3 11H.500Z" fill="#222" stroke="#222" strokeWidth=".6" /></svg>
);

export default function App() {
  return (
    <div className="flex h-[768px] w-[1024px] flex-col overflow-hidden bg-[#efefef] font-['DejaVu_Sans',sans-serif] text-[12px] text-[#111]">
      <TopBar />
      <div className="flex h-[741px] shrink-0">
        <Dock />
        <main className="flex w-[976px] shrink-0 flex-col">
          <div className="flex h-[37px] shrink-0 items-center border-t border-[#3b3b3b] bg-[#2b2b2b] text-white">
            <span className="-mt-px ml-[434px] w-[160px] text-[13px] leading-none font-bold tracking-[-.38px]">FreeCAD 0.20.2</span>
            <svg viewBox="0 0 82 18" className="mr-[9px] ml-auto h-[18px] w-[82px] shrink-0">
              <path d="M1 11.500H9" stroke="#fff" /><path d="M35.500 7.500H40.500V12.500H35.500Z" fill="none" stroke="#fff" /><path d="M37 5.500H42.500V11" fill="none" stroke="#999" />
              <circle cx="73" cy="9" r="9" fill="#e34f1b" /><path d="M69.500 5.500L76.500 12.500M76.500 5.500L69.500 12.500" stroke="#fff" strokeWidth="1.600" />
            </svg>
          </div>
          <Menu />
          <ToolbarFile />
          <ToolbarView />
          <div className="flex h-[577px] shrink-0">
            <ModelPanel />
            <div className="flex w-[6px] shrink-0 items-center justify-center"><div className="mb-1 h-[18px] border-l border-dotted border-[#aaa]" /></div>
            <section className="flex w-[561px] shrink-0 flex-col">
              <Viewport />
              <div className="mt-px flex h-[30px] shrink-0 items-start leading-none">
                <div className="flex h-[28px] w-[163px] items-center rounded-bl-[3px] border border-[#b0b0b0] bg-[#dcdcdc] pl-[11px]">
                  <FreeCad className="h-4 w-4" /><span className="mt-[2px] ml-[4px] w-[102px]">Página de inicio</span><CloseX />
                </div>
                <div className="flex h-[30px] w-[226px] items-center rounded-b-[3px] border border-t-0 border-[#b0b0b0] bg-[#f9f9f9] pl-[11px]">
                  <FreeCad className="h-4 w-4" /><span className="mt-px ml-[4px] w-[165px]">3D1704_Alemany_Pere : 1</span><CloseX />
                </div>
                <div className="h-px flex-1 bg-[#b0b0b0]" />
              </div>
            </section>
          </div>
          <footer className="flex h-[29px] shrink-0 items-center pt-[2px] pl-[2px] leading-none whitespace-nowrap">
            <span className="w-[729px] shrink-0">Preselected: _D1704_Alemany_Pere.Body002.Fillet009.Edge11 (32.620068 mm, 30.323004 mm, 0.000000 mm)</span>
            <Sync dark /><span className="ml-[2px] w-[56px] shrink-0">Gesture</span>
            <svg viewBox="0 0 8 5" className="h-[3px] w-[5px] shrink-0"><path d="M0 0H8L4 5Z" fill="#777" /></svg>
            <span className="ml-[12px]">341,76 mm x 332,02 mm</span>
          </footer>
        </main>
      </div>
    </div>
  );
}
